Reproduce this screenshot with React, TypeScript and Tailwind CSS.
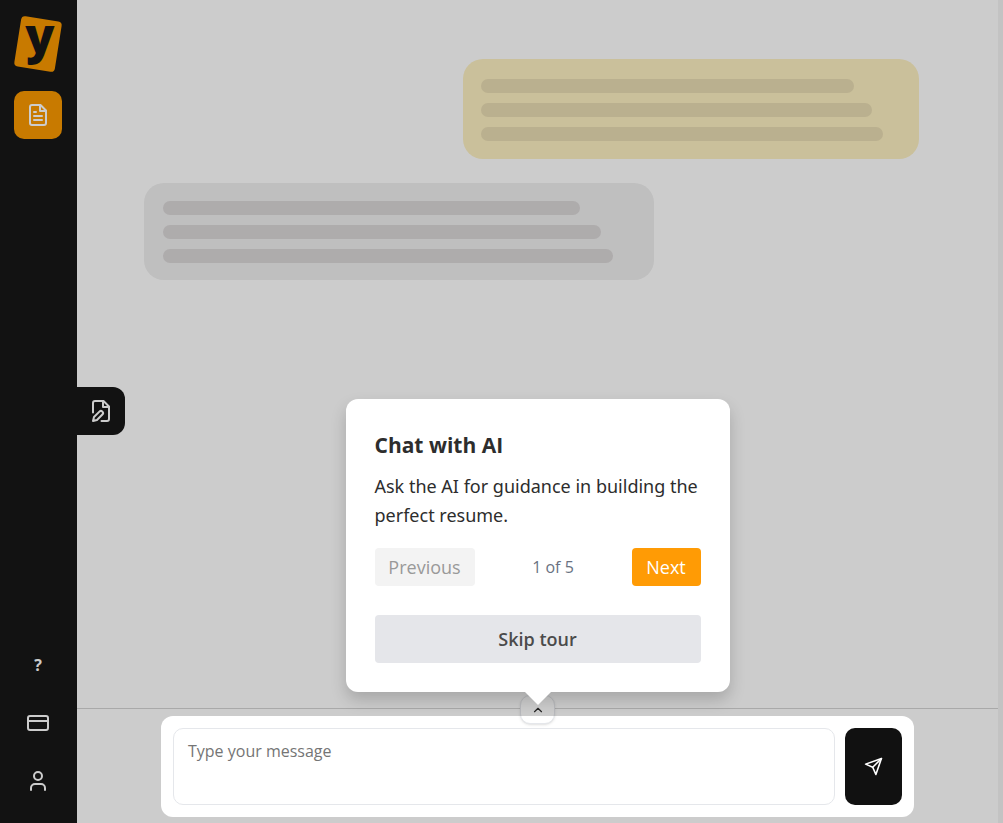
import type { ReactNode } from "react";
import { ChevronUp, CreditCard, User } from "lucide-react";

type SkeletonBubbleProps = {
  className: string;
  barClassName: string;
  widths: string[];
};

function Icon({ className, children }: { className: string; children: ReactNode }) {
  return (
    <svg
      viewBox="0 0 24 24"
      className={className}
      fill="none"
      stroke="currentColor"
      strokeWidth="2"
      strokeLinecap="round"
      strokeLinejoin="round"
      aria-hidden="true"
    >
      {children}
    </svg>
  );
}

function Logo() {
  return (
    <svg viewBox="0 0 48 56" className="h-14 w-12 overflow-visible" role="img" aria-label="Logo">
      <rect
        x="3.5"
        y="2.5"
        width="41"
        height="51"
        rx="4"
        fill="#fa9900"
        transform="rotate(9 24 28)"
      />
      <text
        x="26"
        y="37"
        textAnchor="middle"
        fontFamily="Open Sans, sans-serif"
        fontWeight="800"
        fontSize="48"
        fill="#171717"
      >
        y
      </text>
    </svg>
  );
}

function Sidebar() {
  return (
    <nav className="flex w-[77px] shrink-0 flex-col items-start bg-[#171717] pt-4 pb-[18px] pl-[14px] text-white">
      <Logo />
      <button
        aria-label="Resumes"
        className="mt-[19px] flex size-12 items-center justify-center rounded-[10px] bg-[#fa9900]"
      >
        <Icon className="size-6">
          <path d="M14.5 2H6a2 2 0 0 0-2 2v16a2 2 0 0 0 2 2h12a2 2 0 0 0 2-2V7.5L14.5 2z" />
          <path d="M14 2v6h6" />
          <path d="M10 9H8" />
          <path d="M16 13H8" />
          <path d="M16 17H8" />
        </Icon>
      </button>
      <div className="mt-auto flex flex-col gap-[10px]">
        <button aria-label="Help" className="flex size-12 items-center justify-center font-bold">
          ?
        </button>
        <button aria-label="Billing" className="flex size-12 items-center justify-center">
          <CreditCard className="size-6" />
        </button>
        <button aria-label="Account" className="flex size-12 items-center justify-center">
          <User className="size-6" />
        </button>
      </div>
    </nav>
  );
}

function SkeletonBubble({ className, barClassName, widths }: SkeletonBubbleProps) {
  return (
    <div className={`flex max-w-full flex-col gap-[10px] rounded-[20px] ${className}`}>
      {widths.map((width) => (
        <div key={width} className={`h-[14px] max-w-full rounded-full ${barClassName}`} style={{ width }} />
      ))}
    </div>
  );
}

function TourPopover() {
  return (
    <div
      role="dialog"
      aria-labelledby="tour-title"
      className="relative w-[384px] rounded-xl bg-white p-[29px] text-[#2d2d2d] shadow-[0_8px_16px_rgba(0,0,0,0.18)]"
    >
      <h2 id="tour-title" className="text-[21px] leading-[34px] font-bold">
        Chat with AI
      </h2>
      <p className="mt-[10px] font-['Noto_Sans',sans-serif] text-[18px] leading-[29px]">
        Ask the AI for guidance in building the perfect resume.
      </p>
      <div className="mt-[18px] flex items-center justify-between">
        <button disabled className="h-[38px] w-[100px] rounded bg-[#f3f3f3] text-[18px] text-[#999999]">
          Previous
        </button>
        <span className="text-base text-gray-500">1 of 5</span>
        <button className="h-[38px] w-[69px] rounded bg-[#ff9b05] text-[18px] text-white">Next</button>
      </div>
      <button className="mt-[29px] h-12 w-full rounded bg-[#e5e6ea] text-[18px] font-semibold text-[#4b4b4b]">
        Skip tour
      </button>
      <svg
        viewBox="0 0 26 13"
        className="absolute top-full left-1/2 h-[13px] w-[26px] -translate-x-1/2"
        fill="#ffffff"
      >
        <path d="M0 0h26L13 13z" />
      </svg>
    </div>
  );
}

function Composer() {
  return (
    <footer className="relative border-t border-[#d4d4d4] px-[84px] pt-[7px] pb-[6px]">
      <div className="relative">
        <form className="flex gap-[10px] rounded-xl bg-white p-3" onSubmit={(e) => e.preventDefault()}>
          <textarea
            aria-label="Type your message"
            placeholder="Type your message"
            className="h-[77px] min-w-0 flex-1 resize-none rounded-[10px] border border-gray-200 px-[14px] py-[10px] text-base leading-6 outline-none placeholder:text-[#757575]"
          />
          <button
            type="submit"
            aria-label="Send"
            className="flex h-[77px] w-[57px] items-center justify-center rounded-[10px] bg-[#111111] text-white"
          >
            <Icon className="size-[19px]">
              <path d="m22 2-7 20-4-9-9-4Z" />
              <path d="M22 2 11 13" />
            </Icon>
          </button>
        </form>

        <div className="absolute inset-x-0 -top-[21px] flex justify-center">
          <button
            aria-label="Expand"
            className="flex h-[29px] w-[35px] items-center justify-center rounded-[10px] border border-gray-200 bg-white text-[#2d2d2d] shadow-sm"
          >
            <ChevronUp className="size-[14px]" />
          </button>
        </div>

        {/* spotlight: everything outside this box is dimmed */}
        <div className="pointer-events-none absolute inset-0 z-20 rounded-xl shadow-[0_0_0_9999px_rgba(0,0,0,0.2)]" />

        <div className="absolute inset-x-0 bottom-full z-30 mb-6 flex justify-center">
          <TourPopover />
        </div>
      </div>
    </footer>
  );
}

export default function App() {
  return (
    <div className="flex min-h-screen overflow-hidden bg-white font-['Open_Sans',sans-serif]">
      <Sidebar />
      <main className="relative flex min-w-0 flex-1 flex-col">
        <div className="absolute inset-y-0 left-0 flex items-center pb-px">
          <button
            aria-label="Edit resume"
            className="flex size-12 items-center justify-center rounded-r-xl bg-[#171717] text-white"
          >
            <Icon className="size-6">
              <path d="M4 13.5V4a2 2 0 0 1 2-2h8.5L20 7.5V20a2 2 0 0 1-2 2h-5.5" />
              <path d="M14 2v6h6" />
              <path d="M10.42 12.61a2.1 2.1 0 1 1 2.97 2.97L7.95 21 4 22l.99-3.95 5.43-5.44Z" />
            </Icon>
          </button>
        </div>
        <div className="flex flex-1 flex-col gap-6 pt-[59px] pr-[79px] pl-[67px]">
          <SkeletonBubble
            className="w-[456px] self-end bg-[#fdf1c2] px-[18px] pt-5 pb-[18px]"
            barClassName="bg-[#e9dcb3]"
            widths={["373px", "391px", "402px"]}
          />
          <SkeletonBubble
            className="w-[510px] bg-[#efefef] px-[19px] pt-[18px] pb-[17px]"
            barClassName="bg-[#dad7d8]"
            widths={["417px", "438px", "450px"]}
          />
        </div>
        <Composer />
      </main>
      <div className="w-[5px] shrink-0 bg-[#f4f4f4]" />
    </div>
  );
}
